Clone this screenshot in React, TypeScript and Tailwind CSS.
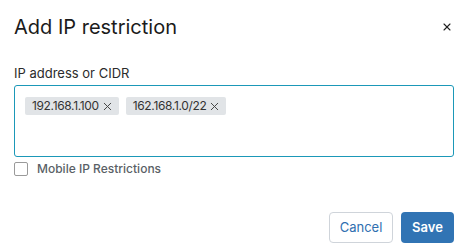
import { X } from "lucide-react"

const ips = ["192.168.1.100", "162.168.1.0/22"]

export default function App() {
  return (
    <div className="w-[470px] h-[251px] bg-white px-[14px] pt-[13px] font-['Inter',sans-serif] text-[#1d1d1d]">
      {/* Header */}
      <div className="flex items-center justify-between">
        <h2 className="text-[20px] leading-[28px] font-normal text-[#1b1b1b]">Add IP restriction</h2>
        <button className="mr-[3px] text-[#222]">
          <X className="w-[12px] h-[12px]" strokeWidth={2.2} />
        </button>
      </div>

      {/* Field */}
      <label className="block mt-[24px] text-[13px] leading-[16px] text-[#2b2b2b]">IP address or CIDR</label>
      <div className="mt-[4px] h-[72px] w-[440px] rounded-[3px] border border-[#1b98b8] px-[10px] py-[11px]">
        <div className="flex gap-[7px]">
          {ips.map((ip) => (
            <span
              key={ip}
              className="flex items-center h-[18px] gap-[2px] rounded-[2px] bg-[#e1e4e7] pl-[7px] pr-[5px] text-[12px] tracking-[-0.35px] text-[#333]"
            >
              {ip}
              <X className="w-[13px] h-[13px] text-[#444]" strokeWidth={1.8} />
            </span>
          ))}
        </div>
      </div>

      {/* Checkbox */}
      <label className="mt-[3px] flex items-center gap-[9px]">
        <span className="w-[14px] h-[14px] rounded-[2px] border border-[#9a9a9a] bg-white" />
        <span className="text-[12px] font-medium text-[#5a5f66]">Mobile IP Restrictions</span>
      </label>

      {/* Footer */}
      <div className="mt-[34px] flex justify-end gap-[8px] pr-[2px]">
        <button className="h-[31px] w-[64px] rounded-[4px] border border-[#cfd4da] bg-white text-[13px] text-[#2f6fb0]">
          Cancel
        </button>
        <button className="h-[31px] w-[53px] rounded-[4px] bg-[#3174b4] text-[13px] font-semibold text-white">
          Save
        </button>
      </div>
    </div>
  )
}
